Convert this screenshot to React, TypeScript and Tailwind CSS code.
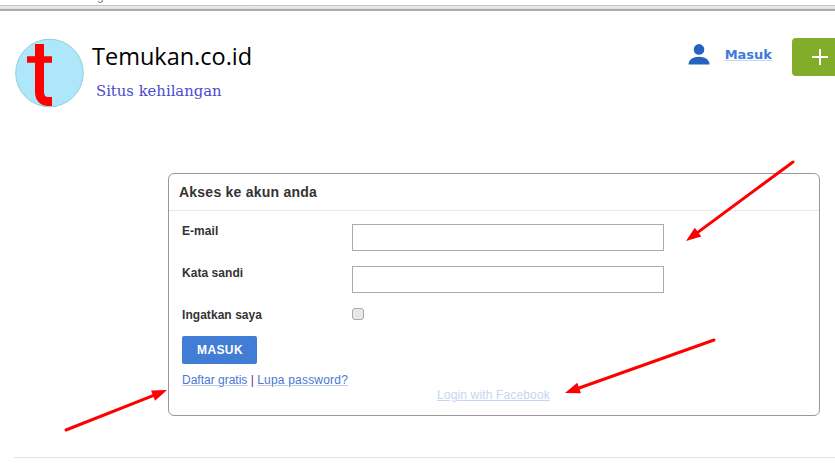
const arial = "font-['Liberation_Sans',Arial,sans-serif]";

function Arrow({ x1, y1, x2, y2 }: { x1: number; y1: number; x2: number; y2: number }) {
  // red annotation arrow, head is a small triangle at x2,y2
  const a = Math.atan2(y2 - y1, x2 - x1);
  const len = 15;
  const w = 5.5;
  const bx = x2 - Math.cos(a) * len;
  const by = y2 - Math.sin(a) * len;
  const px = -Math.sin(a) * w;
  const py = Math.cos(a) * w;
  return (
    <>
      <line x1={x1} y1={y1} x2={bx} y2={by} stroke="#ff0000" strokeWidth={3} strokeLinecap="round" />
      <polygon points={`${x2},${y2} ${bx + px},${by + py} ${bx - px},${by - py}`} fill="#ff0000" />
    </>
  );
}

function Field({ label }: { label: string }) {
  return (
    <div className="flex h-[42px]">
      <label className="w-[170px] text-xs leading-[14px] font-bold text-[#333] tracking-[0.05px]">{label}</label>
      <input type="text" className="w-[312px] h-[27px] border border-[#aaa] bg-white" />
    </div>
  );
}

export default function App() {
  return (
    <div className={`relative w-[835px] h-[471px] overflow-hidden bg-white ${arial}`}>
      {/* browser chrome strip left over at top of the crop */}
      <div className="h-[5px] overflow-hidden pl-[97px]">
        <div className="-mt-[11px] text-xs leading-[14px] text-[#777]">g</div>
      </div>
      <div className="h-[6px] border-t border-t-[#c4c4c4] border-b-2 border-b-[#aaa] bg-linear-to-b from-[#eeeeee] to-[#dddddd]" />

      <header className="flex items-start pl-[15px] pt-[27px] h-[162px]">
        <svg width="69" height="70" viewBox="0 0 69 70" className="shrink-0">
          <circle cx="34.5" cy="35" r="33.8" fill="#aee6fa" stroke="#8fd0dc" strokeWidth="1" />
          <path d="M24.5 6V54C24.5 60 28 63.5 33 63.5H37" fill="none" stroke="#ff0000" strokeWidth="9" />
          <path d="M12 21.5H37" fill="none" stroke="#ff0000" strokeWidth="6.5" />
        </svg>
        <div className="ml-2 pt-[2px]">
          <div className="font-['Open_Sans',sans-serif] text-[23.5px] leading-[33px] text-black">Temukan.co.id</div>
          <div className="ml-1 mt-[8px] font-['DejaVu_Serif',serif] text-[14.8px] leading-5 text-[#4a4ad0]">Situs kehilangan</div>
        </div>
        <div className="ml-auto flex items-start">
          <svg width="22" height="21" viewBox="0 0 22 21" className="mt-[6px] fill-[#2563c0]">
            <circle cx="11" cy="5.4" r="5.3" />
            <path d="M0.5 20.5C0.5 15.5 5 12.7 11 12.7S21.5 15.5 21.5 20.5Z" />
          </svg>
          <a href="#" className="ml-[15px] mt-[7px] text-[13px] font-bold text-[#3f7bd8] underline decoration-[#c5d6f2] font-['DejaVu_Sans',sans-serif]">Masuk</a>
          <button className="ml-[20px] w-[43px] h-[38px] rounded-l-[4px] bg-[#82ad2b] text-white flex items-center pl-[20px]">
            <svg width="16" height="16" viewBox="0 0 16 16"><path d="M8 0V16M0 8H16" stroke="#fff" strokeWidth="2" /></svg>
          </button>
        </div>
      </header>

      <main className="ml-[168px] w-[652px] h-[243px] rounded-[6px] border border-[#999]">
        <div className="h-[37px] border-b border-[#e8e8e8] pl-[10px] pt-[8px] text-sm font-bold text-[#333] tracking-[0.23px]">Akses ke akun anda</div>
        <div className="pl-[13px] pt-[13px]">
          <Field label="E-mail" />
          <Field label="Kata sandi" />
          <div className="flex items-center h-[12px]">
            <span className="w-[170px] pt-[2px] text-xs font-bold text-[#333] tracking-[0.05px]">Ingatkan saya</span>
            <input type="checkbox" className="w-[12px] h-[12px] appearance-none rounded-[3px] border border-[#aaa] bg-[#e8e8e8]" />
          </div>
          <button className="mt-[16px] block w-[75px] h-[28px] rounded-[2px] bg-[#417cd5] text-xs font-bold text-white tracking-[0.4px] pl-[1px]">MASUK</button>
          <div className="mt-[9px] text-xs leading-[14px] text-[#7b2a8c]">
            <a href="#" className="text-[#4a78d0] underline decoration-[#b9cdf0]">Daftar gratis</a>
            {" | "}
            <a href="#" className="text-[#4a78d0] underline decoration-[#b9cdf0] tracking-[0.2px]">Lupa password?</a>
          </div>
          <div className="ml-[255px] mt-[1px] whitespace-nowrap text-xs leading-[14px]">
            <a href="#" className="text-[#c5d6f2] underline decoration-[#c5d6f2] tracking-[0.15px]">Login with Facebook</a>
          </div>
        </div>
      </main>

      <footer className="ml-[14px] mt-[41px] border-t border-[#e2e2e2]" />

      {/* annotation arrows drawn over the screenshot */}
      <svg width="835" height="471" className="absolute left-0 top-0 pointer-events-none">
        <Arrow x1={793} y1={162} x2={686} y2={241} />
        <Arrow x1={714} y1={340} x2={565} y2={393} />
        <Arrow x1={66} y1={430} x2={167} y2={390} />
      </svg>
    </div>
  );
}
